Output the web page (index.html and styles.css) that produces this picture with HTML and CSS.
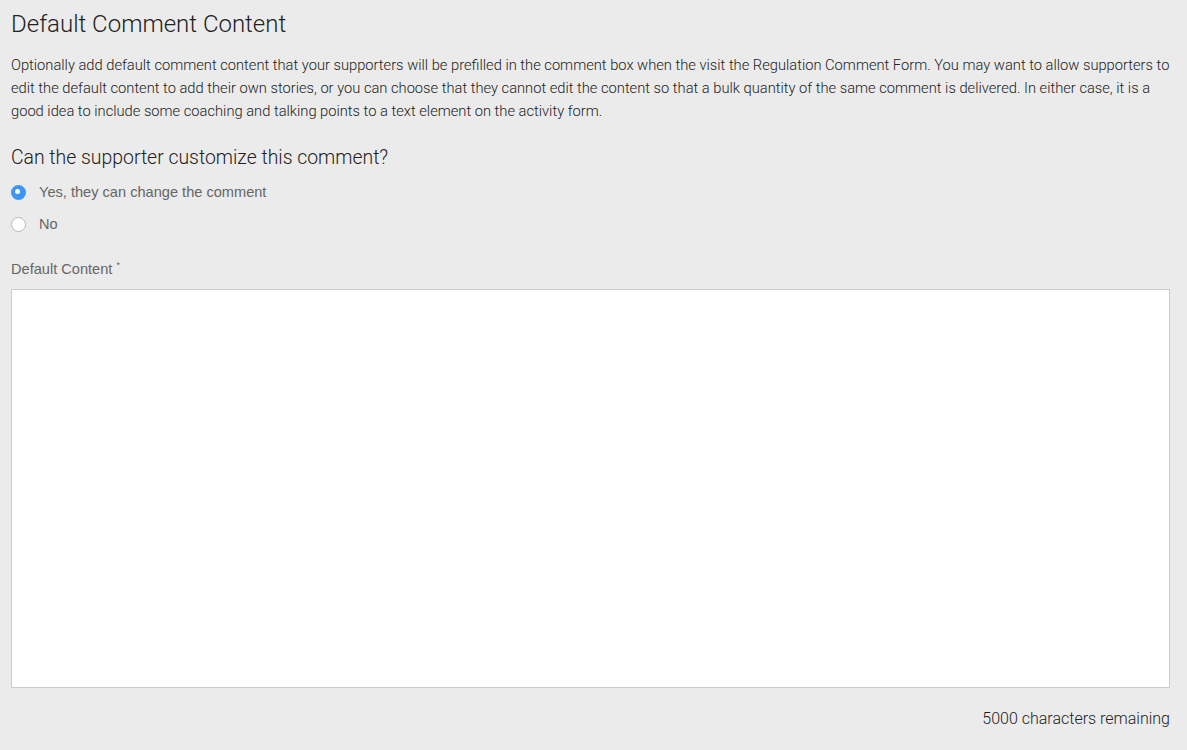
FILE: index.html
```html
<!DOCTYPE html>
<html>
<head>
<meta charset="utf-8">
<link rel="stylesheet" href="styles.css">
</head>
<body>
<div class="page">
  <h1 class="title">Default Comment Content</h1>
  <p class="desc">Optionally add default comment content that your supporters will be prefilled in the comment box when the visit the Regulation Comment Form. You may want to allow supporters to edit the default content to add their own stories, or you can choose that they cannot edit the content so that a bulk quantity of the same comment is delivered. In either case, it is a good idea to include some coaching and talking points to a text element on the activity form.</p>
  <h2 class="question">Can the supporter customize this comment?</h2>
  <div class="radios">
    <label class="radio"><span class="dot checked"></span><span class="rlabel">Yes, they can change the comment</span></label>
    <label class="radio"><span class="dot"></span><span class="rlabel">No</span></label>
  </div>
  <div class="field-label">Default Content <sup class="req">*</sup></div>
  <div class="textarea"></div>
  <div class="remaining">5000 characters remaining</div>
</div>
</body>
</html>
```
FILE: styles.css
```css
html, body {
  margin: 0;
  padding: 0;
  background: #ebebeb;
}
.page {
  padding: 0 17px 0 11px;
  font-family: Roboto, "Noto Sans", sans-serif;
  color: #222;
}
.title {
  margin: 0;
  padding-top: 8px;
  font-size: 24px;
  font-weight: 300;
  line-height: 32px;
  color: #222;
}
.desc {
  margin: 14px 0 0;
  font-size: 14.7px;
  font-weight: 300;
  line-height: 23px;
  color: #222;
}
.question {
  margin: 23px 0 0;
  font-size: 19.4px;
  font-weight: 300;
  line-height: 24px;
  color: #222;
}
.radios {
  display: flex;
  flex-direction: column;
  gap: 12px;
  margin-top: 12px;
}
.radio {
  display: flex;
  align-items: center;
  height: 20px;
}
.dot {
  box-sizing: border-box;
  width: 15px;
  height: 15px;
  border-radius: 50%;
  background: #fff;
  border: 1px solid #b8b8b8;
  margin-right: 13px;
  flex: none;
}
.dot.checked {
  background: #3d95f5;
  border: 5px solid #3d95f5;
  position: relative;
}
.dot.checked::after {
  content: "";
  position: absolute;
  left: -1px;
  top: -1px;
  width: 5px;
  height: 5px;
  border-radius: 50%;
  background: #fff;
}
.rlabel {
  font-family: "Liberation Sans", Arial, sans-serif;
  font-size: 14.6px;
  color: #666;
}
.field-label {
  margin-top: 26px;
  font-family: "Liberation Sans", Arial, sans-serif;
  font-size: 14.6px;
  color: #666;
  line-height: 18px;
}
.req {
  font-size: 9px;
  vertical-align: 6px;
  line-height: 0;
}
.textarea {
  margin-top: 11px;
  height: 397px;
  background: #fff;
  border: 1px solid #cccccc;
}
.remaining {
  margin-top: 21px;
  text-align: right;
  font-size: 16px;
  font-weight: 300;
  line-height: 20px;
  color: #222;
}
```
